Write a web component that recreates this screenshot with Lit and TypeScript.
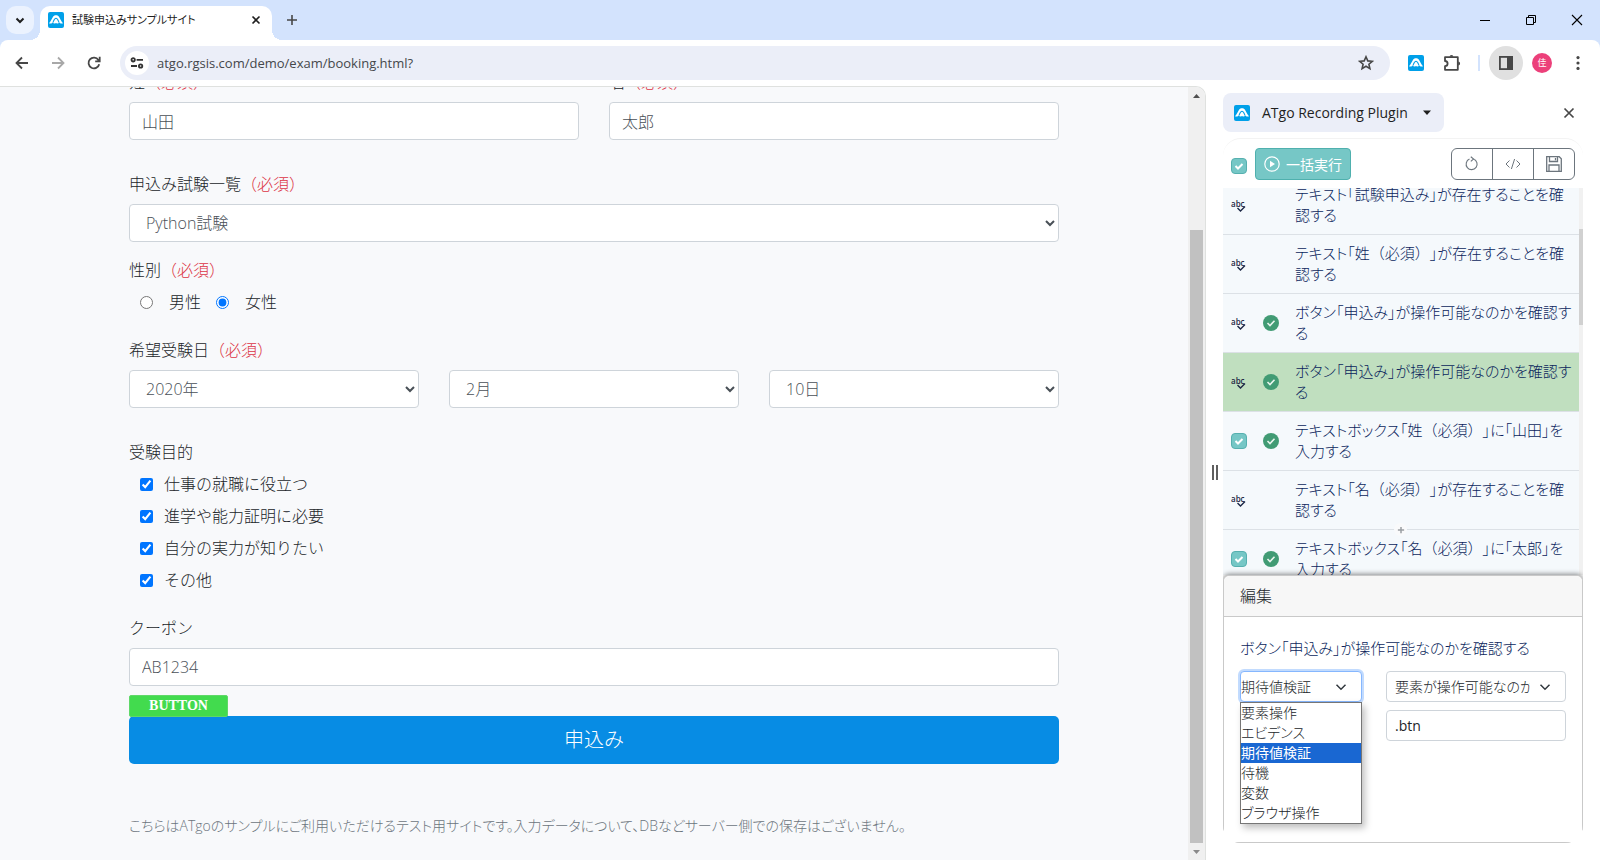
import { LitElement, html, css, svg, nothing } from "lit";
import { customElement } from "lit/decorators.js";
import { classMap } from "lit/directives/class-map.js";

const shared = css`
  * { box-sizing: border-box; }
  button { font: inherit; color: inherit; border: 0; background: none; padding: 0; margin: 0; display: inline-flex; align-items: center; justify-content: center; }
  input, select { font: inherit; margin: 0; }
  svg { display: block; flex: none; }
`;

const logo = html`<svg width="16" height="16" viewBox="0 0 16 16" aria-hidden="true">
  <rect width="16" height="16" rx="2" fill="#00a0e9" />
  <path d="M1 11.2C2.8 9.8 3.8 6.6 5.2 4.6C6.6 2.7 9.4 2.7 10.8 4.6C12.2 6.6 13.2 9.8 15 11.2C13.4 11.9 12 11.4 11 10.2C10.4 12 9.2 11.2 8 11.2C6.8 11.2 5.6 12 5 10.2C4 11.4 2.6 11.9 1 11.2Z" fill="#fff" />
  <path d="M5 10.4C5.8 8.4 6.4 6.2 8 6.2C9.6 6.2 10.2 8.4 11 10.4" fill="none" stroke="#00a0e9" stroke-width="1.1" />
</svg>`;

const line = (d: string, size = 16, width = 2, color = "#474747") => html`<svg width=${size} height=${size} viewBox="0 0 16 16" fill="none" stroke=${color} stroke-width=${width} aria-hidden="true"><path d=${d} /></svg>`;

@customElement("browser-bar")
class BrowserBar extends LitElement {
  static styles = [shared, css`
    :host { display: block; background: #d3e3fd; color: #1f1f1f; }
    .strip { display: flex; height: 40px; padding: 6px 0 0 6px; }
    .search { width: 28px; height: 28px; border-radius: 10px; background: #ebf2fe; margin-right: 6px; }
    .tab { position: relative; display: flex; align-items: center; width: 232px; height: 34px; padding: 0 8px 6px 8px; background: #fff; border-radius: 10px 10px 0 0; font-size: 11px; line-height: 16px; }
    .tab::before, .tab::after { content: ""; position: absolute; bottom: 0; width: 10px; height: 10px; }
    .tab::before { right: 100%; background: radial-gradient(circle at 0 0, transparent 10px, #fff 10px); }
    .tab::after { left: 100%; background: radial-gradient(circle at 100% 0, transparent 10px, #fff 10px); }
    .title { flex: 1; padding-left: 8px; font-feature-settings: "palt"; white-space: nowrap; }
    .new { width: 40px; height: 28px; }
    .window { display: flex; margin-left: auto; }
    .window button { width: 46px; height: 28px; }
    .tools { display: flex; align-items: center; height: 46px; padding: 0 4px; background: #fff; border-radius: 8px 8px 0 0; }
    .tools button { width: 36px; height: 34px; flex: none; }
    .address { flex: 1; display: flex; align-items: center; height: 34px; margin: 0 8px; padding: 0 6px 0 5px; border-radius: 17px; background: #ebeef8; }
    .tools .info { width: 24px; height: 24px; border-radius: 12px; background: #fff; }
    .url { flex: 1; min-width: 0; border: 0; outline: 0; background: none; padding: 0 8px; font-size: 13px; line-height: 20px; color: #45474b; }
    .rule { width: 2px; height: 16px; margin: 0 8px; background: #d3e3fd; }
    .tools .active { width: 34px; margin: 0 1px; border-radius: 17px; background: #e0e0e0; }
    .avatar { width: 20px; height: 20px; border-radius: 10px; background: #ec407a; color: #fff; font-size: 9px; line-height: 20px; text-align: center; }
  `];
  render() {
    return html`
      <div class="strip">
        <button class="search" aria-label="タブを検索">${line("M4.5 6.5L8 10L11.5 6.5", 16, 2, "#1f1f1f")}</button>
        <div class="tab">${logo}<span class="title">試験申込みサンプルサイト</span>
          <button aria-label="タブを閉じる">${line("M4.5 4.5L11.5 11.5M11.5 4.5L4.5 11.5", 16, 1.6, "#1f1f1f")}</button></div>
        <button class="new" aria-label="新しいタブ">${line("M8 3V13M3 8H13", 16, 1.6)}</button>
        <div class="window">
          <button aria-label="最小化">${line("M3 8.5H13", 16, 1, "#000")}</button>
          <button aria-label="元に戻す">${line("M3.5 5.5H10.5V12.5H3.5ZM5.5 5.5V3.5H12.5V10.5H10.5", 16, 1, "#000")}</button>
          <button aria-label="閉じる">${line("M3 3L13 13M13 3L3 13", 16, 1.1, "#000")}</button>
        </div>
      </div>
      <div class="tools">
        <button aria-label="戻る">${line("M14 8H3M8 2.5L2.5 8L8 13.5", 16, 1.8)}</button>
        <button aria-label="進む">${line("M2 8H13M8 2.5L13.5 8L8 13.5", 16, 1.8, "#a8a8a8")}</button>
        <button aria-label="再読み込み">${line("M13.2 9.2A5.4 5.4 0 1 1 12.4 4.9L13.6 6.2M13.7 1.8V6.4H9.2", 16, 1.8)}</button>
        <div class="address">
          <button class="info" aria-label="サイト情報"><svg width="16" height="16" viewBox="0 0 16 16" fill="none" stroke="#333" stroke-width="1.8"><circle cx="4.2" cy="4.8" r="1.7" /><path d="M7.6 4.8H14M2 11H8" /><circle cx="11.6" cy="11" r="1.7" /></svg></button>
          <input class="url" aria-label="アドレス" value="atgo.rgsis.com/demo/exam/booking.html?" />
          <button aria-label="ブックマーク">${line("M8 1.8L9.8 5.9L14.3 6.3L10.9 9.2L11.9 13.6L8 11.3L4.1 13.6L5.1 9.2L1.7 6.3L6.2 5.9Z", 16, 1.6)}</button>
        </div>
        <button aria-label="ATgo">${logo}</button>
        <button aria-label="拡張機能"><svg width="18" height="18" viewBox="0 0 18 18" fill="none" stroke="#474747" stroke-width="1.8" stroke-linejoin="round"><path d="M2 3.2H14.8V15.8H2V12.2A2.4 2.4 0 0 0 2 7Z" /><path d="M6.6 2.8A1.9 1.9 0 0 1 10.4 2.8ZM15.2 7.6A1.9 1.9 0 0 1 15.2 11.4Z" fill="#474747" stroke="none" /></svg></button>
        <span class="rule"></span>
        <button class="active" aria-label="サイドパネル"><svg width="16" height="16" viewBox="0 0 16 16"><rect x="1.9" y="1.9" width="12.2" height="12.2" fill="none" stroke="#474747" stroke-width="1.8" /><path d="M9 2H14V14H9Z" fill="#474747" /></svg></button>
        <button aria-label="プロフィール"><span class="avatar">佳</span></button>
        <button aria-label="メニュー"><svg width="16" height="16" fill="#474747"><circle cx="8" cy="2.6" r="1.6" /><circle cx="8" cy="8" r="1.6" /><circle cx="8" cy="13.4" r="1.6" /></svg></button>
      </div>`;
  }
}

@customElement("booking-page")
class BookingPage extends LitElement {
  static styles = [shared, css`
    :host { display: flex; min-width: 0; background: #f8f9fb; border: solid #dfe1df; border-width: 1px 1px 0 0; border-radius: 0 10px 0 0; overflow: hidden; color: #212529; font-size: 16px; font-weight: 300; line-height: 24px; }
    .view { flex: 1; min-width: 0; display: flex; flex-direction: column; justify-content: flex-end; align-items: center; overflow: hidden; }
    form { width: 100%; max-width: 960px; padding: 0 15px 22px; }
    .names { display: grid; grid-template-columns: 1fr 1fr; gap: 30px; }
    .dates { display: grid; grid-template-columns: 1fr 1fr 1fr; gap: 30px; }
    fieldset { border: 0; margin: 0; padding: 0; min-width: 0; }
    legend { padding: 0; }
    .label { display: block; margin-bottom: 8px; }
    .must { color: #dc3545; }
    .field { display: block; width: 100%; height: 38px; padding: 6px 12px; border: 1px solid #ced4da; border-radius: 4px; background: #fff; color: #495057; }
    .wide { margin-top: 32px; }
    .near { margin-top: 16px; }
    .mid { margin-top: 24px; }
    .radios { display: flex; align-items: center; padding-left: 11px; }
    .radios input, .check input { width: 13px; height: 13px; }
    .radios label { padding: 0 15px 0 16px; }
    .checks { display: grid; gap: 8px; }
    .check { display: flex; align-items: center; gap: 11px; padding-left: 11px; }
    .submit { position: relative; margin-top: 30px; }
    .send { width: 100%; height: 48px; border-radius: 5px; background: #078ce4; color: #fff; font-size: 20px; }
    .tag { position: absolute; left: 0; bottom: 47px; width: 99px; height: 22px; border: 1px solid #5fd868; border-radius: 2px; background: #42db4e; color: #fff; font: bold 14px/19px "Liberation Serif", serif; text-align: center; }
    .note { margin: 50px 0 0; font-size: 14px; color: #6c757d; font-feature-settings: "palt"; }
    .bar { width: 17px; flex: none; display: flex; flex-direction: column; align-items: center; background: #f0f0f0; }
    .bar svg { height: 17px; }
    .track { flex: 1; display: flex; flex-direction: column; }
    .space { flex: 126; }
    .thumb { flex: 613; width: 13px; background: #c1c1c1; }
  `];
  render() {
    const must = html`<span class="must">（必須）</span>`;
    const goals = ["仕事の就職に役立つ", "進学や能力証明に必要", "自分の実力が知りたい", "その他"];
    return html`
      <div class="view"><form @submit=${(e: Event) => e.preventDefault()}>
        <div class="names">
          <div><label class="label" for="last">姓${must}</label><input class="field" id="last" value="山田" /></div>
          <div><label class="label" for="first">名${must}</label><input class="field" id="first" value="太郎" /></div>
        </div>
        <div class="wide"><label class="label" for="exam">申込み試験一覧${must}</label>
          <select class="field" id="exam"><option>Python試験</option></select></div>
        <fieldset class="near"><legend class="label">性別${must}</legend>
          <div class="radios"><input type="radio" name="sex" id="male" /><label for="male">男性</label><input type="radio" name="sex" id="female" checked /><label for="female">女性</label></div></fieldset>
        <fieldset class="mid"><legend class="label">希望受験日${must}</legend>
          <div class="dates">
            <select class="field" aria-label="年"><option>2020年</option></select>
            <select class="field" aria-label="月"><option>2月</option></select>
            <select class="field" aria-label="日"><option>10日</option></select>
          </div></fieldset>
        <fieldset class="wide"><legend class="label">受験目的</legend>
          <div class="checks">${goals.map((g) => html`<label class="check"><input type="checkbox" checked />${g}</label>`)}</div></fieldset>
        <div class="mid"><label class="label" for="coupon">クーポン</label><input class="field" id="coupon" value="AB1234" /></div>
        <div class="submit"><button class="send">申込み</button><span class="tag">BUTTON</span></div>
        <p class="note">こちらはATgoのサンプルにご利用いただけるテスト用サイトです。入力データについて、DBなどサーバー側での保存はございません。</p>
      </form></div>
      <div class="bar">
        <svg width="17" height="17"><path d="M5 11L8.5 7L12 11Z" fill="#505050" /></svg>
        <div class="track"><div class="space"></div><div class="thumb"></div></div>
        <svg width="17" height="17"><path d="M5 7L8.5 11L12 7Z" fill="#8a8a8a" /></svg>
      </div>`;
  }
}

interface Step { text: string; box?: boolean; ok?: boolean; on?: boolean; add?: boolean }

const steps: Step[] = [
  { text: "テキスト「試験申込み」が存在することを確認する" },
  { text: "テキスト「姓（必須）」が存在することを確認する" },
  { text: "ボタン「申込み」が操作可能なのかを確認する", ok: true },
  { text: "ボタン「申込み」が操作可能なのかを確認する", ok: true, on: true },
  { text: "テキストボックス「姓（必須）」に「山田」を入力する", box: true, ok: true },
  { text: "テキスト「名（必須）」が存在することを確認する", add: true },
  { text: "テキストボックス「名（必須）」に「太郎」を入力する", box: true, ok: true },
];

@customElement("recorder-panel")
class RecorderPanel extends LitElement {
  static styles = [shared, css`
    :host { display: flex; background: #fff; color: #212529; }
    .grip { width: 17px; flex: none; display: flex; align-items: center; justify-content: center; gap: 2px; padding-bottom: 1px; }
    .grip i { width: 2px; height: 15px; background: #5f5f5f; }
    .main { flex: 1; min-width: 0; display: flex; flex-direction: column; padding: 7px 17px 17px 0; }
    .head { display: flex; align-items: center; justify-content: space-between; }
    .pill { height: 39px; padding: 0 12px 0 11px; border-radius: 8px; background: #ebeef8; font-size: 14px; font-weight: 500; color: #1f1f1f; }
    .pill span { padding: 0 14px 0 12px; }
    .close { width: 28px; height: 28px; }
    .card { flex: 1; min-height: 0; display: flex; flex-direction: column; margin-top: 6px; border: 1px solid #f3f3f3; border-width: 1px 0 0; border-radius: 18px; overflow: hidden; }
    .tools { display: flex; align-items: center; height: 49px; padding: 1px 8px 0; }
    .box { appearance: none; flex: none; width: 16px; height: 16px; border: 1px solid #56b0af; border-radius: 4px; background: #76c7c6 url("data:image/svg+xml,%3Csvg xmlns='http://www.w3.org/2000/svg' viewBox='0 0 14 14'%3E%3Cpath d='M3.5 7L6 9.5L10.5 5' fill='none' stroke='white' stroke-width='2'/%3E%3C/svg%3E") center / 14px; }
    .tools .box { margin: 4px 8px 0 0; }
    .run { height: 32px; gap: 6px; padding: 0 8px; border: 1px solid #4fb0ae; border-radius: 4px; background: #76c7c6; color: #fff; font-size: 14px; }
    .group { display: flex; width: 124px; margin-left: auto; border: 1px solid #6c757d; border-radius: 6px; }
    .group button { flex: 1; height: 30px; }
    .group button + button { border-left: 1px solid #6c757d; }
    .scroll { flex: 1; min-height: 0; display: flex; }
    .list { flex: 1; min-width: 0; margin: 0; padding: 0; list-style: none; overflow: hidden; background: #f5f9fc; }
    .step { position: relative; display: grid; grid-template-columns: 32px 32px 1fr; align-items: center; padding: 8px 4px 8px 8px; border-bottom: 1px solid #dce1e6; color: #0b1f5c; font-size: 15px; font-weight: 300; line-height: 21px; font-feature-settings: "palt"; }
    .on { background: #c0dfbf; }
    .cell { display: grid; }
    .full { font-feature-settings: normal; text-spacing-trim: space-all; }
    .add { position: absolute; left: 50%; bottom: -7px; z-index: 1; width: 13px; height: 13px; margin-left: -7px; border-radius: 7px; background: #f9fafb; }
    .rail { width: 4px; flex: none; display: flex; flex-direction: column; background: #f1f1f1; }
    .rail .space { flex: 41; }
    .rail .knob { flex: 96; background: #d1d1d1; }
    .rail .rest { flex: 250; }
    .edit { position: relative; flex: none; border: 1px solid #c9c9c9; border-radius: 6px 6px 0 0; background: #fff; box-shadow: 0 -1px 5px rgba(0, 0, 0, .45); }
    .edit h2 { margin: 0; height: 41px; padding: 0 16px; border-bottom: 1px solid #c9c9c9; border-radius: 6px 6px 0 0; background: #f7f7f7; font-size: 16px; font-weight: 300; line-height: 41px; }
    .body { min-height: 225px; padding: 20px 16px; }
    .name { margin: 0 0 12px; color: #0b1f5c; font-size: 15px; font-weight: 300; line-height: 22px; font-feature-settings: "palt"; }
    .fields { display: grid; grid-template-columns: 122px 1fr; gap: 8px 24px; font-size: 14px; font-weight: 300; line-height: 20px; font-feature-settings: "palt"; }
    .fields select, .fields input { display: block; width: 100%; height: 31px; border: 1px solid #ced4da; border-radius: 4px; color: #212529; background: #fff; font-feature-settings: "palt"; }
    .fields select { appearance: none; padding: 0 35px 0 8px; overflow: hidden; white-space: nowrap; text-overflow: clip; background: #fff url("data:image/svg+xml,%3Csvg xmlns='http://www.w3.org/2000/svg' viewBox='0 0 16 16'%3E%3Cpath d='M2 5L8 11L14 5' fill='none' stroke='%23343a40' stroke-width='2'/%3E%3C/svg%3E") right 14px center / 12px no-repeat; }
    .fields .focus { padding: 0; border-color: #86b7fe; box-shadow: 0 0 0 2px #c2dbfe; }
    .fields input { padding: 0 8px; grid-column: 2; font-weight: 400; }
    .combo { position: relative; }
    .menu { position: absolute; top: 100%; left: 0; right: 0; margin: 0; padding: 0; list-style: none; border: 1px solid #767676; background: #fff; box-shadow: 3px 4px 7px rgba(0, 0, 0, .25); }
    .menu .picked { background: #1967d2; color: #fff; font-weight: 400; }
  `];

  firstUpdated() {
    const list = this.renderRoot.querySelector(".list");
    if (list) list.scrollTop = 12;
  }

  private row(s: Step) {
    return html`<li class=${classMap({ step: true, on: !!s.on })}>
      <span class="cell">${s.box
        ? html`<input class="box" type="checkbox" checked aria-label=${s.text} />`
        : html`<svg width="16" height="16" viewBox="0 0 16 16"><text x="0" y="10" font-family="Open Sans, sans-serif" font-weight="600" font-size="8" fill="#1c2745">abc</text><path d="M6.5 11L9.5 14L14 9.5" fill="none" stroke="#1c2745" stroke-width="1.4" /></svg>`}</span>
      <span class="cell">${s.ok ? svg`<svg width="16" height="16" viewBox="0 0 16 16"><circle cx="8" cy="8" r="8" fill="#419b74" /><path d="M4.5 8L7 10.5L11.5 5.8" fill="none" stroke="#e9f5ee" stroke-width="1.6" /></svg>` : nothing}</span>
      <span>${s.text.split(/(（.+?）)/).map((part) => (part.startsWith("（") ? html`<span class="full">${part}</span>` : part))}</span>
      ${s.add ? html`<button class="add" aria-label="追加">${line("M8 3V13M3 8H13", 10, 2.4, "#9a9fa3")}</button>` : nothing}
    </li>`;
  }

  render() {
    const kinds = ["要素操作", "エビデンス", "期待値検証", "待機", "変数", "ブラウザ操作"];
    const gray = "#6c757d";
    return html`
      <div class="grip"><i></i><i></i></div>
      <div class="main">
        <div class="head">
          <button class="pill">${logo}<span>ATgo Recording Plugin</span><svg width="10" height="6"><path d="M1 0.5H9L5 5Z" fill="#1f1f1f" /></svg></button>
          <button class="close" aria-label="閉じる">${line("M3.5 3.5L12.5 12.5M12.5 3.5L3.5 12.5", 16, 1.7)}</button>
        </div>
        <div class="card">
          <div class="tools">
            <input class="box" type="checkbox" checked aria-label="すべて選択" />
            <button class="run"><svg width="16" height="16" viewBox="0 0 16 16"><circle cx="8" cy="8" r="7.2" fill="none" stroke="#fff" stroke-width="1.2" /><path d="M6 4.8L11 8L6 11.2Z" fill="#fff" /></svg>一括実行</button>
            <div class="group">
              <button aria-label="更新">${line("M9.5 3A5.5 5.5 0 1 1 5.5 3.1M6.8 0.8L9.6 3L6.8 5.4", 16, 1.1, gray)}</button>
              <button aria-label="コード">${line("M4.5 4.5L1 8L4.5 11.5M11.5 4.5L15 8L11.5 11.5M9.6 3L6.4 13", 16, 1, gray)}</button>
              <button aria-label="保存">${line("M0.7 0.7H13.2L15.3 2.8V15.3H0.7ZM3.5 0.7V5.5H11.5V0.7M3 15.3V9H13V15.3M9.5 2V4.2", 16, 1.3, gray)}</button>
            </div>
          </div>
          <div class="scroll">
            <ul class="list">${steps.map((s) => this.row(s))}</ul>
            <div class="rail"><div class="space"></div><div class="knob"></div><div class="rest"></div></div>
          </div>
          <section class="edit">
            <h2>編集</h2>
            <div class="body">
              <p class="name">ボタン「申込み」が操作可能なのかを確認する</p>
              <div class="fields">
                <div class="combo">
                  <select class="focus" aria-label="種別"><option>期待値検証</option></select>
                  <ul class="menu" role="listbox" aria-label="種別">
                    ${kinds.map((k) => html`<li role="option" class=${classMap({ picked: k === "期待値検証" })}>${k}</li>`)}
                  </ul>
                </div>
                <select aria-label="検証内容"><option>要素が操作可能なのかを確認する</option></select>
                <input aria-label="セレクター" value=".btn" />
              </div>
            </div>
          </section>
        </div>
      </div>`;
  }
}

@customElement("app-root")
class AppRoot extends LitElement {
  static styles = css`
    :host { display: flex; flex-direction: column; height: 100vh; overflow: hidden; background: #fff; font-family: "Open Sans", "Noto Sans CJK JP", sans-serif; }
    .body { flex: 1; min-height: 0; display: grid; grid-template: minmax(0, 1fr) / minmax(0, 1fr) 394px; }
  `;
  render() {
    return html`<browser-bar></browser-bar>
      <div class="body"><booking-page></booking-page><recorder-panel></recorder-panel></div>`;
  }
}
